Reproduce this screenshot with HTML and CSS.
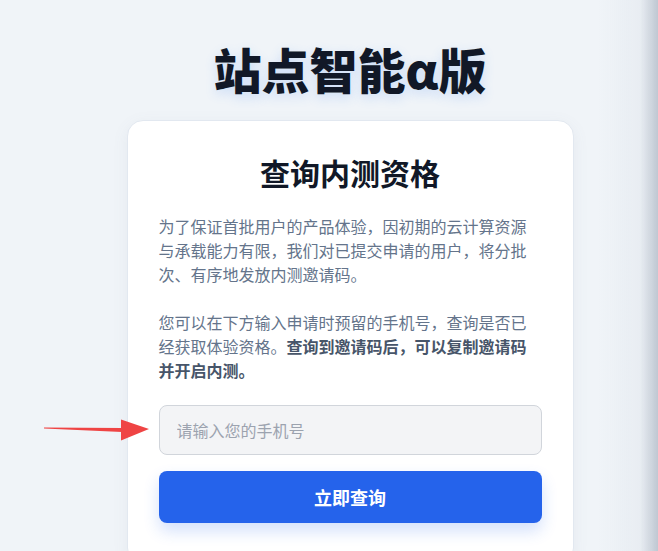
FILE: index.html
```html
<!DOCTYPE html>
<html lang="zh-CN">
<head>
  <meta charset="UTF-8">
  <meta name="viewport" content="width=device-width, initial-scale=1.0">
  <title>站点智能α版 - 查询内测资格</title>
  <link rel="stylesheet" href="styles.css">
</head>
<body>
  <div class="page">
    <h1 class="site-title">站点智能α版</h1>

    <div class="card">
      <h2 class="card-title">查询内测资格</h2>
      <p class="intro">为了保证首批用户的产品体验，因初期的云计算资源与承载能力有限，我们对已提交申请的用户，将分批次、有序地发放内测邀请码。</p>
      <p class="intro">您可以在下方输入申请时预留的手机号，查询是否已经获取体验资格。<strong>查询到邀请码后，可以复制邀请码并开启内测。</strong></p>

      <div class="field">
        <svg class="pointer-arrow" width="110" height="24" viewBox="0 0 110 24">
          <polygon points="0,9.5 78,10 78,14 0,10.5" fill="#ef4444"/>
          <polygon points="77,1.5 105,11 77,22.5" fill="#ef4444"/>
        </svg>
        <input type="tel" class="phone-input" placeholder="请输入您的手机号">
      </div>
      <button class="query-btn">立即查询</button>
    </div>
  </div>
  <div class="edge-shade"></div>
</body>
</html>
```

FILE: styles.css
```css
* {
  box-sizing: border-box;
}

body {
  margin: 0;
  background-color: #f0f4f8;
  font-family: "Noto Sans CJK SC", "Noto Sans", sans-serif;
  overflow: hidden;
}

/* content column is centred at x=350, a bit right of the window centre */
.page {
  padding-top: 30px;
  padding-left: 42px;
  display: flex;
  flex-direction: column;
  align-items: center;
}

.site-title {
  margin: 0;
  font-size: 48px;
  font-weight: 900;
  line-height: 76px;
  color: #111827;
  text-shadow: 0 4px 12px rgba(59, 130, 246, 0.2);
}

.card {
  margin-top: 14px;
  width: 447px;
  background-color: #fff;
  border: 1px solid #e2e8f0;
  border-radius: 16px;
  padding: 30px 31px 40px;
  box-shadow: 0 4px 16px rgba(100, 116, 139, 0.08);
}

.card-title {
  margin: 0 0 21px;
  text-align: center;
  font-size: 30px;
  font-weight: 700;
  line-height: 42px;
  color: #111827;
}

.intro {
  margin: 0;
  font-size: 16px;
  line-height: 24px;
  color: #64748b;
}

.intro + .intro {
  margin-top: 24px;
}

.intro strong {
  color: #475569;
  font-weight: 700;
}

.field {
  position: relative;
  margin-top: 23px;
}

.pointer-arrow {
  position: absolute;
  left: -115px;
  top: 13px;
}

.phone-input {
  display: block;
  width: 100%;
  height: 50px;
  padding: 0 17px;
  background-color: #f3f4f6;
  border: 1px solid #d1d5db;
  border-radius: 8px;
  font-family: inherit;
  font-size: 16px;
  color: #111827;
}

.phone-input::placeholder {
  color: #9ca3af;
}

.query-btn {
  display: block;
  width: 100%;
  height: 52px;
  margin-top: 16px;
  border: none;
  border-radius: 8px;
  background-color: #2563eb;
  color: #fff;
  font-family: inherit;
  font-size: 18px;
  font-weight: 700;
  box-shadow: 0 8px 16px rgba(37, 99, 235, 0.2);
  cursor: pointer;
}

.edge-shade {
  position: fixed;
  top: 0;
  right: 0;
  width: 60px;
  height: 100%;
  background: linear-gradient(to right, rgba(148, 163, 184, 0), rgba(148, 163, 184, 0.08) 70%, rgba(100, 116, 139, 0.35));
  pointer-events: none;
}
```
